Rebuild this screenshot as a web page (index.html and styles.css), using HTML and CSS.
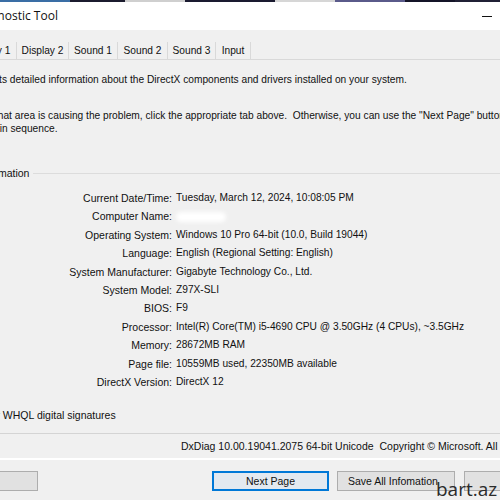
FILE: index.html
```html
<!DOCTYPE html>
<html>
<head>
<meta charset="utf-8">
<link rel="stylesheet" href="styles.css">
</head>
<body>
<div class="window">
  <div class="strip">
    <span class="s1"></span><span class="s2"></span><span class="s3"></span><span class="s4"></span><span class="s5"></span><span class="s6"></span><span class="s7"></span><span class="s8"></span>
  </div>
  <div class="titlebar">
    <span class="title">DirectX Diagnostic Tool</span>
    <span class="minimize"></span>
  </div>
  <div class="tabs">
    <span class="tab t1">Display 1</span>
    <span class="tab t2">Display 2</span>
    <span class="tab t3">Sound 1</span>
    <span class="tab t4">Sound 2</span>
    <span class="tab t5">Sound 3</span>
    <span class="tab t6">Input</span>
  </div>
  <div class="panel">
    <p class="intro">This tool reports detailed information about the DirectX components and drivers installed on your system.</p>
    <p class="intro2">If you know what area is causing the problem, click the appropriate tab above.&nbsp; Otherwise, you can use the "Next Page" button below to visit each page<br><span class="l3">button below to visit each page in sequence.</span></p>
    <div class="group">
      <span class="legend">System Information</span>
      <span class="gline"></span>
    </div>
    <div class="info">
      <span class="k">Current Date/Time:</span><span class="v">Tuesday, March 12, 2024, 10:08:05 PM</span>
      <span class="k">Computer Name:</span><span class="v"><span class="blur"></span></span>
      <span class="k">Operating System:</span><span class="v">Windows 10 Pro 64-bit (10.0, Build 19044)</span>
      <span class="k">Language:</span><span class="v">English (Regional Setting: English)</span>
      <span class="k">System Manufacturer:</span><span class="v">Gigabyte Technology Co., Ltd.</span>
      <span class="k">System Model:</span><span class="v">Z97X-SLI</span>
      <span class="k">BIOS:</span><span class="v">F9</span>
      <span class="k">Processor:</span><span class="v">Intel(R) Core(TM) i5-4690 CPU @ 3.50GHz (4 CPUs), ~3.5GHz</span>
      <span class="k">Memory:</span><span class="v">28672MB RAM</span>
      <span class="k">Page file:</span><span class="v">10559MB used, 22350MB available</span>
      <span class="k">DirectX Version:</span><span class="v">DirectX 12</span>
    </div>
    <div class="whql">Check for WHQL digital signatures</div>
  </div>
  <div class="version">DxDiag 10.00.19041.2075 64-bit Unicode&nbsp; Copyright © Microsoft. All rights reserved.</div>
  <div class="buttons">
    <span class="btn b-help">Help</span>
    <span class="btn b-next">Next Page</span>
    <span class="btn b-save">Save All Infomation</span>
    <span class="btn b-exit">Exit</span>
  </div>
  <div class="watermark">bart.az</div>
</div>
</body>
</html>
```
FILE: styles.css
```css
* { box-sizing: border-box; }
html, body { margin: 0; padding: 0; }
body { width: 500px; height: 500px; overflow: hidden; }
.window {
  width: 500px; height: 500px; overflow: hidden; position: relative;
  background: #f0f0f0;
  font-family: "Liberation Sans", Arial, sans-serif;
  font-size: 10.5px; color: #111;
}
.strip { display: flex; height: 2px; }
.strip span { height: 2px; }
.s1 { width: 70px; background: #3a6ea5; }
.s2 { width: 55px; background: #1b1b2e; }
.s3 { width: 60px; background: #cfcfcf; }
.s4 { width: 90px; background: #1a1a30; }
.s5 { width: 60px; background: #d6d6d6; }
.s6 { width: 70px; background: #5a5a8a; }
.s7 { width: 50px; background: #141428; }
.s8 { flex: 1; background: #202035; }
.titlebar {
  height: 28px; background: #fff; display: flex; align-items: center;
  justify-content: space-between;
}
.title {
  font-family: "Open Sans", "Liberation Sans", sans-serif;
  font-size: 12px; color: #111; margin-left: -71px; margin-top: -2px; white-space: nowrap;
}
.minimize { width: 10px; height: 1px; background: #111; margin-right: 8px; }
.tabs {
  margin-top: 12px; height: 18px; display: flex; align-items: stretch;
  border-bottom: 1px solid #d9d9d9;
}
.tab {
  flex-shrink: 0; border-right: 1px solid #d9d9d9; display: flex; align-items: center;
  justify-content: center; font-size: 10.2px; color: #111; white-space: nowrap;
}
.t1 { width: 54px; margin-left: -37px; }
.t2 { width: 52px; }
.t3 { width: 49px; }
.t4 { width: 50px; }
.t5 { width: 48px; }
.t6 { width: 35px; }
.intro { margin: 14px 0 0 -66px; white-space: nowrap; font-size: 10.2px; line-height: 12px; }
.intro2 { margin: 23px 0 0 -64px; white-space: nowrap; line-height: 13px; font-size: 10.2px; }
.l3 { margin-left: -79px; }
.group { display: flex; align-items: center; margin-top: 32px; margin-left: -61px; }
.legend { white-space: nowrap; }
.gline { flex: 1; height: 1px; background: #dcdcdc; margin-left: 4px; }
.info {
  display: grid; grid-template-columns: 176px auto; row-gap: 6.4px;
  margin-top: 13px; line-height: 12px;
}
.k { text-align: right; padding-right: 4px; white-space: nowrap; }
.v { white-space: nowrap; font-size: 10.2px; }
.blur { display: inline-block; width: 50px; height: 10px; background: #fff; border-radius: 6px; filter: blur(2px); vertical-align: middle; }
.whql { margin-top: 21px; margin-left: -45px; white-space: nowrap; }
.version {
  margin-top: 12px; border-top: 1px solid #d4d4d4; border-bottom: 2px solid #fff;
  padding: 6px 0 6px 181px; white-space: nowrap; height: 27px;
}
.buttons { display: flex; margin-top: 11px; height: 20px; }
.btn {
  flex-shrink: 0; height: 20px; border: 1px solid #adadad; background: #e1e1e1;
  display: flex; align-items: center; justify-content: center; white-space: nowrap;
}
.b-help { width: 120px; margin-left: -82px; }
.b-next { width: 117px; margin-left: 174px; border: 2px solid #0078d7; background: #e3e9f0; }
.b-save { width: 118px; margin-left: 8px; justify-content: flex-start; padding-left: 10px; }
.b-exit { width: 90px; margin-left: 9px; }
.watermark {
  position: absolute; left: 436px; top: 478px;
  font-family: "Open Sans", "Liberation Sans", sans-serif; font-size: 19px; color: #2b2b2b;
  line-height: 22px;
}
```
